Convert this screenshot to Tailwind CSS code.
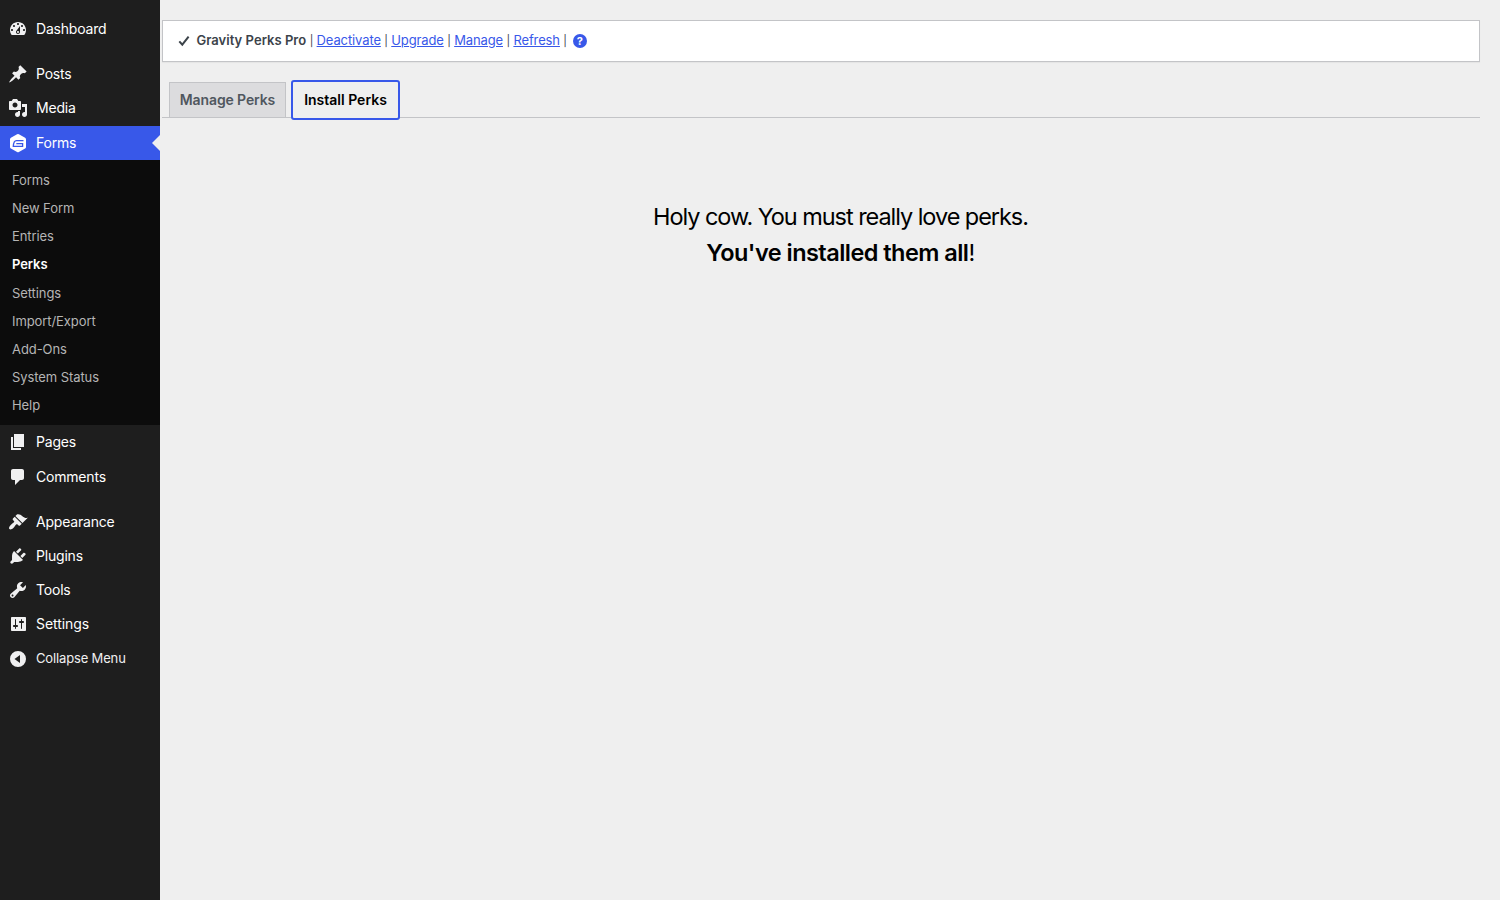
<!DOCTYPE html>
<html lang="en">

<head>
    <meta charset="utf-8">
    <title>Gravity Perks</title>
    <meta name="viewport" content="width=device-width, initial-scale=1.0">

    <script src="https://cdn.jsdelivr.net/npm/@tailwindcss/browser@4"></script>
</head>

<body class="flex h-screen overflow-hidden bg-[#efefef] font-['Inter',sans-serif] text-[13px] text-[#3c434a]">
    <aside class="w-40 shrink-0 bg-[#1e1e1e] pt-3 text-sm tracking-[-0.2px] text-white">
        <nav>
            <ul>
                <li>
                    <a href="#" class="flex h-[34.2px] items-center gap-2 pl-2">
                        <svg class="size-5 fill-[#f0f0f1]" viewBox="0 0 20 20"><path d="M3.76 16h12.48c1.1-1.37 1.76-3.11 1.76-5 0-4.42-3.58-8-8-8s-8 3.58-8 8c0 1.89.66 3.63 1.76 5zM10 4c.55 0 1 .45 1 1s-.45 1-1 1-1-.45-1-1 .45-1 1-1zM6 6c.55 0 1 .45 1 1s-.45 1-1 1-1-.45-1-1 .45-1 1-1zm8 0c.55 0 1 .45 1 1s-.45 1-1 1-1-.45-1-1 .45-1 1-1zm-5.37 5.55L12 7v6c0 1.1-.9 2-2 2s-2-.9-2-2c0-.57.24-1.08.63-1.45zM4 10c.55 0 1 .45 1 1s-.45 1-1 1-1-.45-1-1 .45-1 1-1zm12 0c.55 0 1 .45 1 1s-.45 1-1 1-1-.45-1-1 .45-1 1-1zm-5 3c0-.55-.45-1-1-1s-1 .45-1 1 .45 1 1 1 1-.45 1-1z"/></svg>
                        <span>Dashboard</span>
                    </a>
                </li>
                <li class="mt-[11px]">
                    <a href="#" class="flex h-[34.2px] items-center gap-2 pl-2">
                        <svg class="size-5 fill-[#f0f0f1]" viewBox="0 0 20 20"><path d="M10.44 3.02l1.82-1.82 6.36 6.35-1.83 1.82c-1.05-.68-2.48-.57-3.41.36l-.75.75c-.92.93-1.04 2.35-.35 3.41l-1.83 1.82-2.41-2.41-2.8 2.79c-.42.42-3.38 2.71-3.8 2.29s1.86-3.39 2.28-3.81l2.79-2.79L4.1 9.36l1.83-1.82c1.05.69 2.48.57 3.4-.36l.75-.75c.93-.92 1.05-2.35.36-3.41z"/></svg>
                        <span>Posts</span>
                    </a>
                </li>
                <li>
                    <a href="#" class="flex h-[34.2px] items-center gap-2 pl-2">
                        <svg class="size-5 fill-[#f0f0f1]" viewBox="0 0 20 20"><path d="M13 11V4c0-.55-.45-1-1-1h-1.67L9 1H5L3.67 3H2c-.55 0-1 .45-1 1v7c0 .55.45 1 1 1h10c.55 0 1-.45 1-1zM7 4.5c1.38 0 2.5 1.12 2.5 2.5S8.38 9.5 7 9.5 4.5 8.38 4.5 7 5.62 4.5 7 4.5zM14 6h5v10.5c0 1.38-1.12 2.5-2.5 2.5S14 17.88 14 16.5s1.12-2.5 2.5-2.5c.17 0 .34.02.5.05V9h-3V6zm-4 8.05V13h2v3.5c0 1.38-1.12 2.5-2.5 2.5S7 17.88 7 16.5 8.12 14 9.5 14c.17 0 .34.02.5.05z"/></svg>
                        <span>Media</span>
                    </a>
                </li>
                <li>
                    <a href="#" class="relative flex h-[34.2px] items-center gap-2 bg-[#3858e9] pl-2">
                        <svg class="size-5" viewBox="0 0 20 20"><path class="fill-white" d="M9.1 1.300q.9-.5 1.800 0l6.200 3.500q.9.5.9 1.500v7.800q0 1-.9 1.500l-6.200 3.500q-.9.5-1.800 0l-6.200-3.500q-.9-.5-.9-1.500V6.300q0-1 .9-1.500z"/><path class="fill-none stroke-[#3858e9] stroke-[1.3]" d="M15.500 7.600H8.500C6.400 7.600 5.500 9.400 5.300 13.400H14.600V10.600H8.300"/></svg>
                        <span>Forms</span>
                        <!-- current item arrow -->
                        <span class="absolute right-0 top-[9px] border-y-8 border-r-8 border-y-transparent border-r-[#efefef]"></span>
                    </a>
                    <ul class="h-[265.2px] bg-[#0c0c0c] pt-[6.6px] text-[13px] tracking-[-0.08px] text-[#b5b5b5]">
                        <li class="flex h-[28.1px] items-center pl-3"><a href="#">Forms</a></li>
                        <li class="flex h-[28.1px] items-center pl-3"><a href="#">New Form</a></li>
                        <li class="flex h-[28.1px] items-center pl-3"><a href="#">Entries</a></li>
                        <li class="flex h-[28.1px] items-center pl-3 font-semibold text-white"><a href="#">Perks</a></li>
                        <li class="flex h-[28.1px] items-center pl-3 pt-[0.8px]"><a href="#">Settings</a></li>
                        <li class="flex h-[28.1px] items-center pl-3"><a href="#">Import/Export</a></li>
                        <li class="flex h-[28.1px] items-center pl-3"><a href="#">Add-Ons</a></li>
                        <li class="flex h-[28.1px] items-center pl-3"><a href="#">System Status</a></li>
                        <li class="flex h-[28.1px] items-center pl-3"><a href="#">Help</a></li>
                    </ul>
                </li>
                <li class="mb-[0.8px]">
                    <a href="#" class="flex h-[34.2px] items-center gap-2 pl-2">
                        <svg class="size-5 fill-[#f0f0f1]" viewBox="0 0 20 20"><path d="M6 15V2h10v13H6zm-1 1h8v2H3V5h2v11z"/></svg>
                        <span>Pages</span>
                    </a>
                </li>
                <li>
                    <a href="#" class="flex h-[34.2px] items-center gap-2 pl-2">
                        <svg class="size-5 fill-[#f0f0f1]" viewBox="0 0 20 20"><path d="M5 2h9c1.1 0 2 .9 2 2v7c0 1.1-.9 2-2 2h-2l-5 5v-5H5c-1.1 0-2-.9-2-2V4c0-1.1.9-2 2-2z"/></svg>
                        <span>Comments</span>
                    </a>
                </li>
                <li class="-mb-[0.8px] mt-[11px]">
                    <a href="#" class="flex h-[34.2px] items-center gap-2 pl-2">
                        <svg class="size-5 fill-[#f0f0f1]" viewBox="0 0 20 20"><path d="M14.48 11.06L7.41 3.99l1.5-1.5c.5-.56 2.3-.47 3.51.32 1.21.8 1.43 1.28 2.91 2.1 1.18.64 2.45 1.26 4.45.85zm-.71.71L6.7 4.7 4.93 6.47c-.39.39-.39 1.02 0 1.41l1.06 1.06c.39.39.39 1.03 0 1.42-.6.6-1.43 1.11-2.21 1.69-.35.26-.7.53-1.01.84C1.43 14.23.4 16.08 1.4 17.07c.99 1 2.84-.03 4.18-1.36.31-.31.58-.66.85-1.02.57-.78 1.08-1.61 1.69-2.21.39-.39 1.02-.39 1.41 0l1.06 1.06c.39.39 1.02.39 1.41 0z"/></svg>
                        <span>Appearance</span>
                    </a>
                </li>
                <li>
                    <a href="#" class="flex h-[34.2px] items-center gap-2 pl-2">
                        <svg class="size-5 fill-[#f0f0f1]" viewBox="0 0 20 20"><path d="M13.11 4.36L9.87 7.6 8 5.73l3.24-3.24c.35-.34 1.05-.2 1.56.32.52.51.66 1.21.31 1.55zm-8 1.77l.91-1.12 9.01 9.01-1.19.84c-.71.71-2.63 1.16-3.82 1.16H6.14L4.9 17.26c-.59.59-1.54.59-2.12 0-.59-.58-.59-1.53 0-2.12l1.24-1.24v-3.88c0-1.13.4-3.19 1.09-3.89zm7.26 3.97l3.24-3.24c.34-.35 1.04-.21 1.55.31.52.51.66 1.21.31 1.55l-3.24 3.25z"/></svg>
                        <span>Plugins</span>
                    </a>
                </li>
                <li>
                    <a href="#" class="flex h-[34.2px] items-center gap-2 pl-2">
                        <svg class="size-5 fill-[#f0f0f1]" viewBox="0 0 20 20"><path d="M16.68 9.77c-1.34 1.34-3.3 1.67-4.95.99l-5.41 6.52c-.99.99-2.59.99-3.58 0s-.99-2.59 0-3.57l6.52-5.42c-.68-1.65-.35-3.61.99-4.95 1.28-1.28 3.12-1.62 4.72-1.06l-2.89 2.89 2.82 2.82 2.86-2.87c.53 1.58.18 3.39-1.08 4.65zM3.81 16.21c.4.39 1.04.39 1.43 0 .4-.4.4-1.04 0-1.43-.39-.4-1.03-.4-1.43 0-.39.39-.39 1.03 0 1.43z"/></svg>
                        <span>Tools</span>
                    </a>
                </li>
                <li>
                    <a href="#" class="flex h-[34.2px] items-center gap-2 pl-2">
                        <svg class="size-5 fill-[#f0f0f1]" viewBox="0 0 20 20"><path d="M18 16V4c0-.55-.45-1-1-1H4c-.55 0-1 .45-1 1v12c0 .55.45 1 1 1h13c.55 0 1-.45 1-1zM8 11h1c.55 0 1 .45 1 1s-.45 1-1 1H8v1.500c0 .28-.22.5-.5.5s-.5-.22-.5-.5V13H6c-.55 0-1-.45-1-1s.45-1 1-1h1V5.500c0-.28.22-.5.5-.5s.5.22.5.5V11zm5-2h-1c-.55 0-1-.45-1-1s.45-1 1-1h1V5.500c0-.28.22-.5.5-.5s.5.22.5.5V7h1c.55 0 1 .45 1 1s-.45 1-1 1h-1v5.500c0 .28-.22.5-.5.5s-.5-.22-.5-.5V9z"/></svg>
                        <span class="tracking-[-0.05px]">Settings</span>
                    </a>
                </li>
                <li class="mt-[0.5px]">
                    <button type="button" class="flex h-[34.2px] items-center gap-2 pl-2 text-[13px] tracking-[-0.15px] text-[#f0f0f1]">
                        <svg class="size-5 fill-[#f0f0f1]" viewBox="0 0 20 20"><path fill-rule="evenodd" d="M10 2a8 8 0 1 1 0 16 8 8 0 0 1 0-16zM12 6v8l-5.500-4z"/></svg>
                        <span>Collapse Menu</span>
                    </button>
                </li>
            </ul>
        </nav>
    </aside>

    <main class="flex-1 pl-0.5 pr-5 pt-5">
        <div class="flex h-[42px] items-center border border-[#c3c4c7] bg-white pl-[15px] shadow-[0_1px_1px_rgba(0,0,0,0.04)]">
            <svg class="mr-[6.500px] h-3 w-3 fill-none stroke-[#3c434a] stroke-2" viewBox="0 0 12 12"><path d="M1.300 6.300L4.300 9.700 10.600 1.700"/></svg>
            <div class="flex items-center tracking-[-0.12px]">
                <strong class="font-semibold tracking-[0.03px]">Gravity Perks Pro</strong>
                <span class="w-[10.4px] text-center text-[11px]">|</span>
                <a href="#" class="text-[#3858e9] underline">Deactivate</a>
                <span class="w-[10.4px] text-center text-[11px]">|</span>
                <a href="#" class="text-[#3858e9] underline">Upgrade</a>
                <span class="w-[10.4px] text-center text-[11px]">|</span>
                <a href="#" class="text-[#3858e9] underline">Manage</a>
                <span class="w-[10.4px] text-center text-[11px]">|</span>
                <a href="#" class="text-[#3858e9] underline">Refresh</a>
                <span class="w-[10.4px] text-center text-[11px]">|</span>
            </div>
            <a href="#" title="Help" class="ml-[2.6px] flex size-[14px] items-center justify-center rounded-full bg-[#3858e9] text-[11px] font-bold text-white">?</a>
        </div>

        <div class="mt-5 flex h-9 items-end border-b border-[#c3c4c7] pl-[7px] text-sm font-semibold">
            <a href="#" class="flex h-[35px] w-[117px] items-center justify-center border border-b-0 border-[#c3c4c7] bg-[#dcdcde] tracking-[-0.12px] text-[#50575e]">Manage Perks</a>
            <a href="#" class="relative -bottom-[3px] ml-[5px] flex h-10 w-[109px] items-center justify-center rounded-[3px] border-2 border-[#3858e9] bg-[#efefef] text-black">Install Perks</a>
        </div>

        <div class="mt-[81px] pl-[39px] text-center text-black">
            <p class="text-[23.5px]/9 tracking-[-1.05px]">Holy cow. You must really love perks.</p>
            <p class="text-[23.5px]/9 tracking-[-0.54px]"><strong class="font-semibold">You've installed them all</strong>!</p>
        </div>
    </main>
</body>

</html>
